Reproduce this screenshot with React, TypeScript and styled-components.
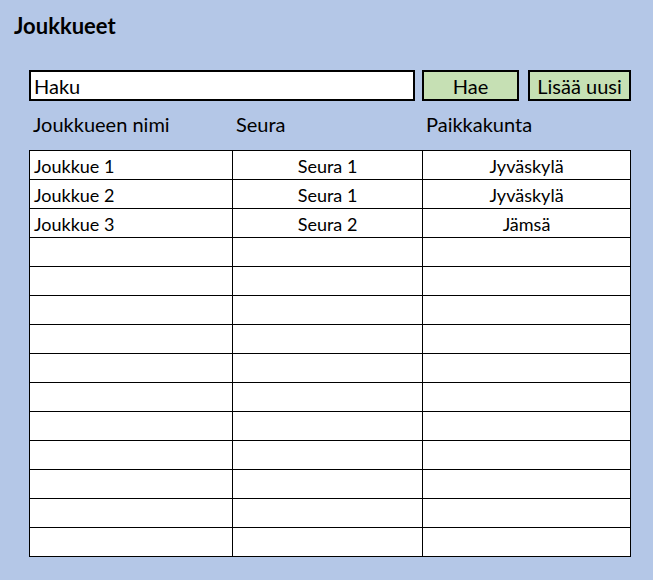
import React from "react";
import styled, { createGlobalStyle } from "styled-components";

const Global = createGlobalStyle`
  html, body { margin: 0; padding: 0; }
  body { background: #b4c7e7; font-family: Lato, "Open Sans", sans-serif; color: #000; }
`;

const Page = styled.div`
  width: 653px;
  height: 580px;
  box-sizing: border-box;
  padding: 13px 22px 0 29px;
  display: flex;
  flex-direction: column;
`;

const Title = styled.h1`
  margin: 0 0 0 -15px;
  font-size: 22px;
  font-weight: 700;
  line-height: 26px;
  height: 26px;
`;

const Toolbar = styled.div`
  margin-top: 31px;
  display: flex;
  align-items: flex-start;
  height: 31px;
`;

const SearchInput = styled.input`
  box-sizing: border-box;
  width: 386px;
  height: 31px;
  border: 2px solid #000;
  background: #fff;
  font-family: inherit;
  font-size: 20px;
  padding: 0 3px;
  margin: 0;
  outline: none;
`;

const Button = styled.button<{ $w: number; $ml: number }>`
  box-sizing: border-box;
  width: ${(p) => p.$w}px;
  height: 31px;
  margin-left: ${(p) => p.$ml}px;
  border: 2px solid #000;
  background: #c6e0b4;
  font-family: inherit;
  font-size: 20px;
  padding: 0;
  color: #000;
`;

const Headers = styled.div`
  display: grid;
  grid-template-columns: 203px 190px 1fr;
  margin-top: 11px;
  height: 38px;
  font-size: 20px;
  line-height: 24px;
  padding-left: 4px;
`;

const Table = styled.table`
  border-collapse: collapse;
  width: 602px;
  table-layout: fixed;
  background: #fff;
  font-size: 18px;
`;

const Row = styled.tr`
  height: 29px;
`;

const Cell = styled.td<{ $left?: boolean }>`
  border: 1.5px solid #000;
  padding: 1px 4px 0;
  text-align: ${(p) => (p.$left ? "left" : "center")};
  line-height: 22px;
`;

const data = [
  ["Joukkue 1", "Seura 1", "Jyväskylä"],
  ["Joukkue 2", "Seura 1", "Jyväskylä"],
  ["Joukkue 3", "Seura 2", "Jämsä"],
];

const rows = Array.from({ length: 14 }, (_, i) => data[i] ?? ["", "", ""]);

export default function App() {
  return (
    <Page>
      <Global />
      <Title>Joukkueet</Title>
      <Toolbar>
        <SearchInput defaultValue="Haku" />
        <Button $w={97} $ml={7}>Hae</Button>
        <Button $w={103} $ml={9}>Lisää uusi</Button>
      </Toolbar>
      <Headers>
        <span>Joukkueen nimi</span>
        <span>Seura</span>
        <span>Paikkakunta</span>
      </Headers>
      <Table>
        <colgroup>
          <col style={{ width: 203 }} />
          <col style={{ width: 190 }} />
          <col />
        </colgroup>
        <tbody>
          {rows.map((r, i) => (
            <Row key={i}>
              <Cell $left>{r[0]}</Cell>
              <Cell>{r[1]}</Cell>
              <Cell>{r[2]}</Cell>
            </Row>
          ))}
        </tbody>
      </Table>
    </Page>
  );
}
